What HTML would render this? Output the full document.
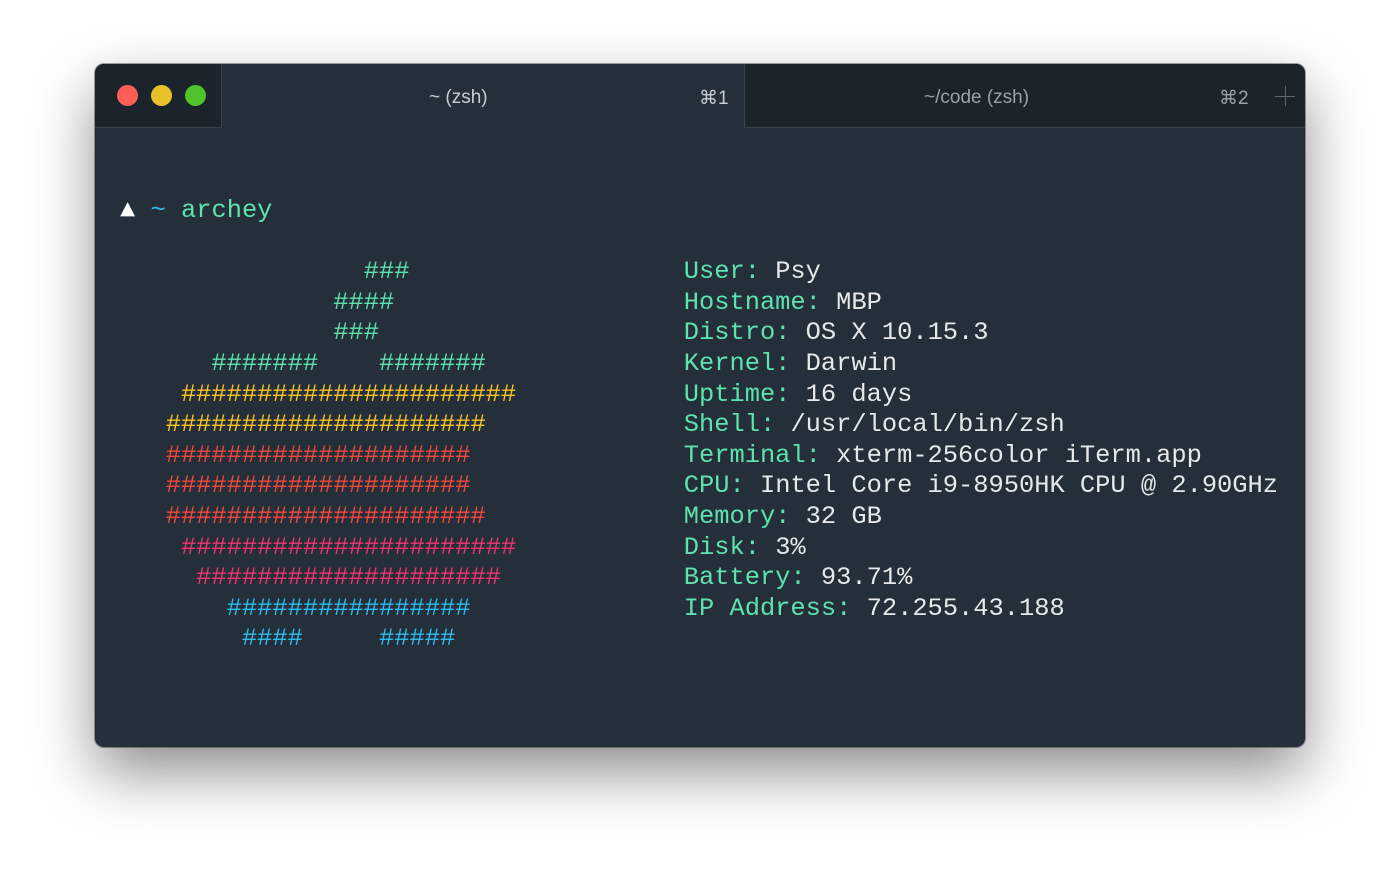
<!DOCTYPE html>
<html><head><style>
html,body{margin:0;padding:0;background:#fff;width:1400px;height:873px;overflow:hidden}
.win{position:absolute;left:95px;top:64px;width:1210px;height:683px;background:#252f39;border-radius:9px;overflow:hidden;box-shadow:0 25px 60px rgba(0,0,0,.45),0 0 0 1px rgba(0,0,0,.35)}
.bar{position:absolute;left:0;top:0;width:1210px;height:64px}
.lights{position:absolute;left:0;top:0;width:126px;height:63px;background:#1c242b;border-right:1px solid #39424a;border-bottom:1px solid #39424a}
.dot{position:absolute;top:21px;width:21px;height:21px;border-radius:50%}
.t2{position:absolute;left:649px;top:0;width:561px;height:63px;background:#1c242b;border-left:1px solid #39424a;border-bottom:1px solid #39424a}
.tt{position:absolute;top:23px;font:19px "Liberation Sans",sans-serif}
.term{position:absolute;left:25px;top:132px;font:25.4px/30.6px "Liberation Mono",monospace;white-space:pre;color:#e6e9ea}
.g{color:#5de2b0}.y{color:#f8c426}.r{color:#f5473d}.p{color:#f33472}.b{color:#2cbcf0}.w{color:#fff}
</style></head><body>
<div class="win">
<div class="bar">
<div class="lights">
<div class="dot" style="left:22px;background:#fe5e56"></div>
<div class="dot" style="left:56px;background:#e9c02a"></div>
<div class="dot" style="left:90px;background:#50c22a"></div>
</div>
<div class="tt" style="left:334px;color:#c9cdd1">~ (zsh)</div>
<div class="tt" style="left:604px;color:#c9cdd1">⌘1</div>
<div class="t2">
<div class="tt" style="left:179px;color:#9aa1a7">~/code (zsh)</div>
<div class="tt" style="left:474px;color:#9aa1a7">⌘2</div>
<div style="position:absolute;left:530px;top:32px;width:20px;height:1px;background:#5d666d"></div>
<div style="position:absolute;left:540px;top:22px;width:1px;height:20px;background:#5d666d"></div>
</div>
</div>
<div class="term"><span class="w">▲</span> <span class="b">~</span> <span class="g">archey</span>

<span class="g">                ###                  User: </span>Psy
<span class="g">              ####                   Hostname: </span>MBP
<span class="g">              ###                    Distro: </span>OS X 10.15.3
<span class="g">      #######    #######             Kernel: </span>Darwin
<span class="y">    ######################           </span><span class="g">Uptime: </span>16 days
<span class="y">   #####################             </span><span class="g">Shell: </span>/usr/local/bin/zsh
<span class="r">   ####################              </span><span class="g">Terminal: </span>xterm-256color iTerm.app
<span class="r">   ####################              </span><span class="g">CPU: </span>Intel Core i9-8950HK CPU @ 2.90GHz
<span class="r">   #####################             </span><span class="g">Memory: </span>32 GB
<span class="p">    ######################           </span><span class="g">Disk: </span>3%
<span class="p">     ####################            </span><span class="g">Battery: </span>93.71%
<span class="b">       ################              </span><span class="g">IP Address: </span>72.255.43.188
<span class="b">        ####     #####</span>
</div>
</div>
</body></html>
